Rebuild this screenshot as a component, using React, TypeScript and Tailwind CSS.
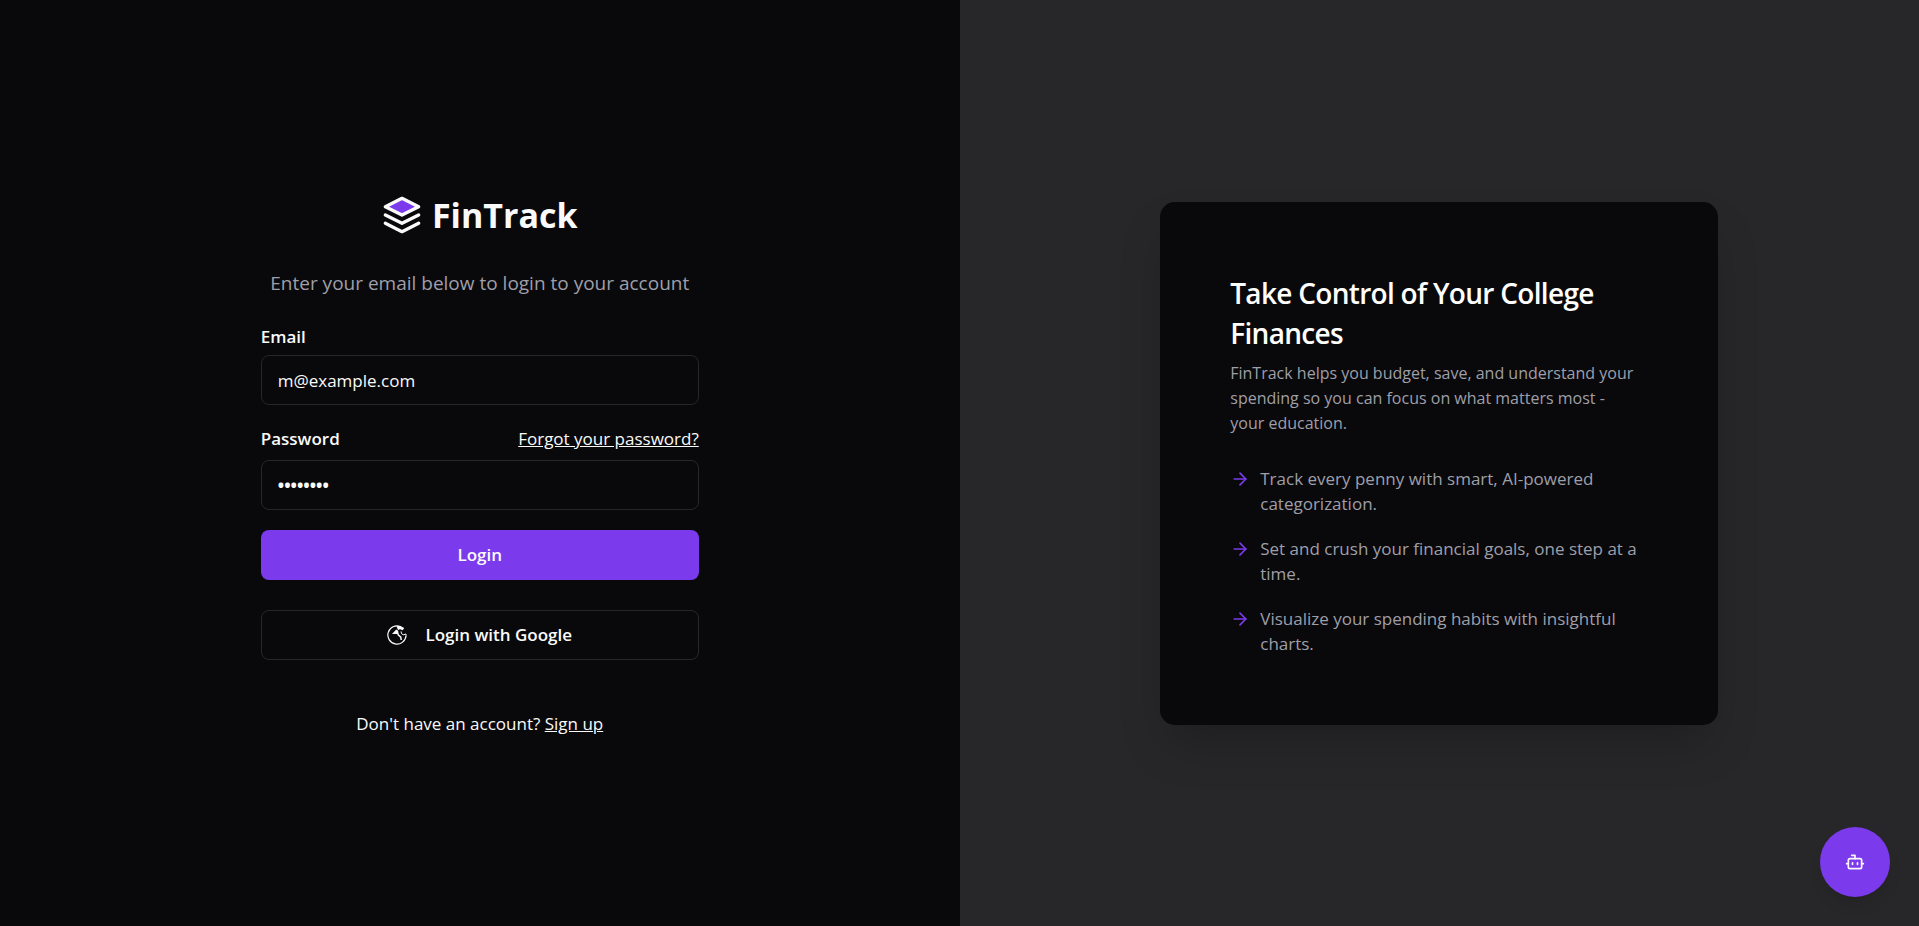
import { ArrowRight, Bot } from "lucide-react";

const features = [
  "Track every penny with smart, AI-powered categorization.",
  "Set and crush your financial goals, one step at a time.",
  "Visualize your spending habits with insightful charts.",
];

function LayersLogo() {
  return (
    <svg
      className="size-10"
      viewBox="0 0 24 24"
      fill="none"
      stroke="currentColor"
      strokeWidth="2"
      strokeLinecap="round"
      strokeLinejoin="round"
      aria-hidden="true"
    >
      <path d="M12 2 2 7l10 5 10-5-10-5z" fill="#7c3aed" />
      <path d="m2 17 10 5 10-5" />
      <path d="m2 12 10 5 10-5" />
    </svg>
  );
}

function GlobeIcon() {
  return (
    <svg className="size-5" viewBox="0 0 20 20" fill="none" aria-hidden="true">
      <path
        d="M13.4 1.6A9.1 9.1 0 1 0 19 11"
        stroke="currentColor"
        strokeWidth="1.2"
      />
      <path d="M9.4 1h4.2l3.6 2-1.5 2.2-2.7-.9-2 .8z" fill="currentColor" />
      <path d="M5 9 9.2 4.4l2 1.3-.5 3.2z" fill="currentColor" />
      <path d="m10.3 6 .9 3.8 2.6 2.4.4 2.8" stroke="currentColor" strokeWidth="1.5" />
      <path d="m14 6.4.6 2.4 1.6 1 2.8-.8v2.4" stroke="currentColor" strokeWidth="1" />
    </svg>
  );
}

const inputClass =
  "h-[50px] w-full rounded-lg border border-[#27272a] bg-[#09090b] px-4 text-[17px] text-zinc-50 outline-none";

export default function App() {
  return (
    <main className="grid min-h-screen bg-[#09090b] font-['Open_Sans',sans-serif] text-zinc-50 lg:grid-cols-2">
      <section className="flex items-center justify-center px-4">
        <div className="flex w-full max-w-[438px] flex-col">
          <div className="flex h-[52px] items-center justify-center gap-2.5">
            <LayersLogo />
            <h1 className="text-[34px] leading-[52px] font-bold">FinTrack</h1>
          </div>
          <p className="mt-[27px] text-center text-[19px] leading-[30px] text-zinc-400">
            Enter your email below to login to your account
          </p>

          <form className="mt-[29px] flex flex-col gap-5" onSubmit={(e) => e.preventDefault()}>
            <div className="flex flex-col gap-2">
              <label htmlFor="email" className="text-[17px] leading-5 font-semibold">
                Email
              </label>
              <input id="email" type="email" defaultValue="m@example.com" className={inputClass} />
            </div>
            <div className="flex flex-col gap-2">
              <div className="flex items-center justify-between text-[17px] leading-[27px]">
                <label htmlFor="password" className="font-semibold">
                  Password
                </label>
                <a href="#forgot" className="underline">
                  Forgot your password?
                </a>
              </div>
              <input
                id="password"
                type="password"
                defaultValue="password"
                className={`${inputClass} font-bold`}
              />
            </div>
            <button
              type="submit"
              className="h-[50px] rounded-lg bg-[#7c3aed] text-[17px] font-semibold text-zinc-50"
            >
              Login
            </button>
            <button
              type="button"
              className="mt-2.5 flex h-[50px] items-center justify-center gap-[18px] rounded-lg border border-[#27272a] text-[17px] font-semibold"
            >
              <GlobeIcon />
              Login with Google
            </button>
          </form>

          <p className="mt-[50px] text-center text-[17px] leading-[27px]">
            Don't have an account?{" "}
            <a href="#signup" className="underline">
              Sign up
            </a>
          </p>
        </div>
      </section>

      <aside className="hidden items-center justify-center bg-[#27272a] px-4 lg:flex">
        <div className="w-full max-w-[558px] rounded-[15px] bg-[#09090b] px-[70px] pt-[71px] pb-[69px] shadow-2xl">
          <h2 className="text-[28px] leading-10 font-semibold tracking-tight text-white">
            Take Control of Your College Finances
          </h2>
          <p className="mt-2 pr-2 text-base leading-[25px] text-zinc-400">
            FinTrack helps you budget, save, and understand your spending so you can focus on what
            matters most - your education.
          </p>
          <ul className="mt-[30px] flex flex-col gap-5 text-[17px] leading-[25px] text-zinc-400">
            {features.map((feature) => (
              <li key={feature} className="flex items-start gap-2.5">
                <ArrowRight className="mt-[3px] size-5 shrink-0 text-[#7c3aed]" />
                <span>{feature}</span>
              </li>
            ))}
          </ul>
        </div>
      </aside>

      <button
        type="button"
        aria-label="Open assistant"
        className="fixed right-[29px] bottom-[29px] flex size-[70px] items-center justify-center rounded-full bg-[#7c3aed] text-zinc-50 shadow-lg"
      >
        <Bot className="size-5" />
      </button>
    </main>
  );
}
